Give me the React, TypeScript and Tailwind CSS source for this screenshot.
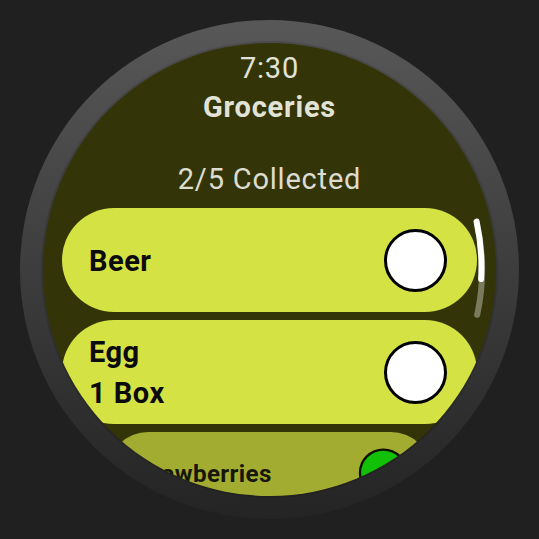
import React from "react";

function Chip({
  children,
  checked = false,
  labelClass = "text-[29px]",
}: {
  children: React.ReactNode;
  checked?: boolean;
  labelClass?: string;
}) {
  return (
    <div className="flex h-[104px] w-[415px] shrink-0 items-center justify-between rounded-full bg-[#d5e244] pl-[27px] pr-[30px]">
      <div
        className={
          labelClass +
          " pt-[2px] font-bold leading-[41px] tracking-[0.5px] text-[#0b0b0b]"
        }
      >
        {children}
      </div>
      <div
        className={
          checked
            ? "h-[63px] w-[63px] rounded-full border-[3px] border-black bg-[#05ff0a]"
            : "h-[63px] w-[63px] rounded-full border-[3px] border-black bg-white"
        }
      />
    </div>
  );
}

export default function App() {
  return (
    <div
      className="relative flex h-[539px] w-[539px] items-center justify-center bg-[#202020]"
      style={{ fontFamily: "Roboto, 'Noto Sans', sans-serif" }}
    >
      <div className="h-[499px] w-[499px] rounded-full bg-gradient-to-b from-[#585858] to-[#242424] p-[23px]">
        <div className="flex h-full w-full flex-col items-center overflow-hidden rounded-full bg-[#333508] shadow-[0_0_0_2px_rgba(0,0,0,0.12)]">
          <div className="mt-[11px] text-[29px] leading-[29px] tracking-[0.8px] text-[#e2e3d7]">
            7:30
          </div>
          <div className="mt-[10px] text-[29px] font-bold leading-[29px] tracking-[0.8px] text-[#e2e3d7]">
            Groceries
          </div>
          <div className="mt-[43px] text-[29px] leading-[29px] tracking-[0.8px] text-[#dcddd0]">
            2/5 Collected
          </div>
          <div className="mt-[14px] flex flex-col items-center gap-[8px]">
            <Chip>Beer</Chip>
            <Chip>
              Egg
              <br />1 Box
            </Chip>
            <div className="origin-top scale-[0.78] opacity-[0.69]">
              <Chip checked labelClass="text-[31px]">
                Strawberries
              </Chip>
            </div>
          </div>
        </div>
      </div>
      <svg
        className="pointer-events-none absolute inset-0"
        width="539"
        height="539"
        viewBox="0 0 539 539"
      >
        <path
          d="M 476.6 221.6 A 212 212 0 0 1 477.2 314.8"
          fill="none"
          stroke="rgba(255,255,255,0.35)"
          strokeWidth="6"
          strokeLinecap="round"
        />
        <path
          d="M 476.6 221.6 A 212 212 0 0 1 481.1 279.0"
          fill="none"
          stroke="#ffffff"
          strokeWidth="6"
          strokeLinecap="round"
        />
      </svg>
    </div>
  );
}
